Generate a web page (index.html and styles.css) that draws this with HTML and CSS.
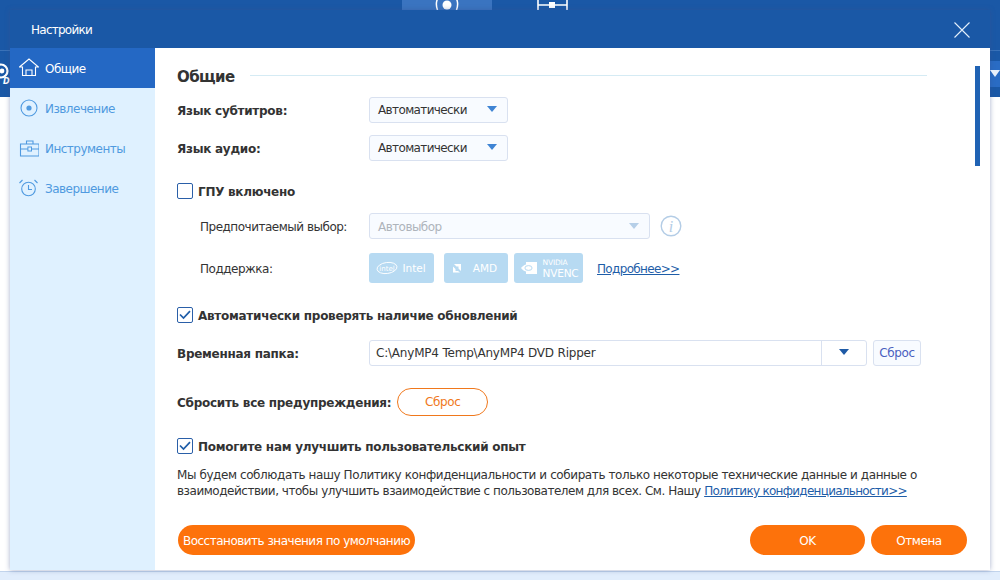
FILE: index.html
```html
<!DOCTYPE html>
<html lang="ru">
<head>
<meta charset="utf-8">
<title>Настройки</title>
<link rel="stylesheet" href="styles.css">
</head>
<body>
<div class="desktop">
  <div class="app-bg">
    <div class="app-top"></div>
    <div class="app-tab"><svg width="30" height="10" viewBox="0 0 30 10"><circle cx="15" cy="5" r="4.5" fill="#fff"/><path d="M6 -2 Q3 3 5.5 10M24 -2 Q27 3 24.5 10" fill="none" stroke="#fff" stroke-width="1.5"/></svg></div>
    <svg class="app-tool" width="32" height="10" viewBox="0 0 32 10"><path d="M1 0V10M30 0V10M1 5H30" stroke="#fff" stroke-width="1.6" fill="none"/><rect x="12" y="2" width="6" height="6" fill="#fff"/></svg>
    <svg class="app-disc" width="10" height="24" viewBox="0 0 10 24"><circle cx="1" cy="8" r="6.5" fill="none" stroke="#fff" stroke-width="2.2"/><circle cx="2" cy="8" r="2.4" fill="#fff"/><text x="3" y="21" class="disc-t">D</text></svg>
    <div class="app-arrow"></div>
    <div class="app-bottom"></div>
  </div>
  <div class="dialog">
    <header class="title-bar">
      <span class="title">Настройки</span>
      <svg class="close" width="16" height="16" viewBox="0 0 16 16"><path d="M.5.5 15.5 15.5M15.5.5.5 15.5" stroke="#e4f0fb" stroke-width="1.1" fill="none"/></svg>
    </header>
    <div class="body">
      <nav class="sidebar">
        <a class="nav-item active">
          <svg class="nav-icon" width="20" height="20" viewBox="0 1 20 20"><path d="M.5 10 10 2 19.5 10H16.5V18.5H3.5V10ZM7 18.5V13H13V18.5" fill="none" stroke="currentColor" stroke-width="1.1"/></svg>
          <span>Общие</span>
        </a>
        <a class="nav-item">
          <svg class="nav-icon" width="20" height="20" viewBox="0 0 20 20"><circle cx="10" cy="10" r="8" fill="none" stroke="currentColor" stroke-width="1.1"/><circle cx="10" cy="10" r="2.6" fill="currentColor"/></svg>
          <span>Извлечение</span>
        </a>
        <a class="nav-item">
          <svg class="nav-icon" width="20" height="20" viewBox="-1.5 0 20 20"><path d="M0 6H18.5V18H0ZM0 11H18.5M6 6V3H12.5V6" fill="none" stroke="currentColor" stroke-width="1.1"/><rect x="7.4" y="9" width="3.6" height="4" fill="#dff1ff" stroke="currentColor"/></svg>
          <span>Инструменты</span>
        </a>
        <a class="nav-item">
          <svg class="nav-icon" width="20" height="20" viewBox="0 0 20 20"><circle cx="9.5" cy="11" r="6.8" fill="none" stroke="currentColor" stroke-width="1.1"/><path d="M9.5 7V11.5H13M.5 5 3.5 2M18.5 5 15.5 2" fill="none" stroke="currentColor" stroke-width="1.1"/></svg>
          <span>Завершение</span>
        </a>
      </nav>
      <main class="content">
        <div class="scrollbar"></div>
        <div class="heading"><h1>Общие</h1><span class="rule"></span></div>

        <div class="row r-lang1">
          <label class="label">Язык субтитров:</label>
          <div class="select s-lang"><span>Автоматически</span><i class="caret"></i></div>
        </div>
        <div class="row r-lang2">
          <label class="label">Язык аудио:</label>
          <div class="select s-lang"><span>Автоматически</span><i class="caret"></i></div>
        </div>

        <div class="check-row r-gpu"><span class="box"></span><span class="label">ГПУ включено</span></div>

        <div class="row sub r-pref">
          <span class="sublabel">Предпочитаемый выбор:</span>
          <div class="select s-pref disabled"><span>Автовыбор</span><i class="caret"></i></div>
          <svg class="info" width="22" height="22" viewBox="0 0 22 22"><circle cx="11" cy="11" r="9.8" fill="none" stroke="#b4cde6" stroke-width="1.4"/><text x="11" y="16.5" text-anchor="middle" class="info-i">i</text></svg>
        </div>
        <div class="row sub r-support">
          <span class="sublabel">Поддержка:</span>
          <div class="chips">
            <span class="chip c-intel"><svg width="22" height="14" viewBox="0 0 22 14"><ellipse cx="11" cy="7" rx="10" ry="5.5" fill="none" stroke="#fff" stroke-width=".9" transform="rotate(-8 11 7)"/><text x="11" y="9.5" text-anchor="middle" class="intel-t">intel</text></svg><span class="chip-t">Intel</span></span>
            <span class="chip c-amd"><svg width="10" height="10" viewBox="0 0 10 10"><path d="M2 1H9V8L6.5 5.5V3.5H4.5ZM1 3.5 3.5 6V8H6L8 9.5H1Z" fill="#fff"/></svg><span class="chip-t">AMD</span></span>
            <span class="chip c-nv"><svg width="16" height="12" viewBox="0 0 16 12"><path d="M5 0H16V12H5V9.5C3 9 1 7.5 0 6 1 4.5 3 3 5 2.5Z" fill="#fff"/><ellipse cx="7.5" cy="6" rx="3.6" ry="2.4" fill="none" stroke="#b7daf2"/></svg><span class="chip-nv"><small>NVIDIA</small><b>NVENC</b></span></span>
          </div>
          <a class="link more">Подробнее&gt;&gt;</a>
        </div>

        <div class="check-row r-auto"><span class="box checked"><svg width="12" height="10" viewBox="0 0 12 10"><path d="M1 4.5 4.5 8 11 1.2" fill="none" stroke="#1e5da8" stroke-width="1.7"/></svg></span><span class="label">Автоматически проверять наличие обновлений</span></div>

        <div class="row r-temp">
          <label class="label">Временная папка:</label>
          <div class="path"><span class="path-t">C:\AnyMP4 Temp\AnyMP4 DVD Ripper</span><span class="path-btn"><i class="caret dark"></i></span></div>
          <button class="mini">Сброс</button>
        </div>

        <div class="reset-row">
          <span class="label">Сбросить все предупреждения:</span>
          <button class="outline">Сброс</button>
        </div>

        <div class="check-row r-help"><span class="box checked"><svg width="12" height="10" viewBox="0 0 12 10"><path d="M1 4.5 4.5 8 11 1.2" fill="none" stroke="#1e5da8" stroke-width="1.7"/></svg></span><span class="label">Помогите нам улучшить пользовательский опыт</span></div>

        <p class="note">Мы будем соблюдать нашу Политику конфиденциальности и собирать только некоторые технические данные и данные о<br><span class="note-tight">взаимодействии, чтобы улучшить взаимодействие с пользователем для всех. См. Нашу</span> <a class="link note-link">Политику конфиденциальности&gt;&gt;</a></p>

        <footer class="footer">
          <button class="pill restore">Восстановить значения по умолчанию</button>
          <div class="footer-right">
            <button class="pill ok">OK</button>
            <button class="pill cancel">Отмена</button>
          </div>
        </footer>
      </main>
    </div>
  </div>
</div>
</body>
</html>
```
FILE: styles.css
```css
* { box-sizing: border-box; }
html, body { margin: 0; height: 100%; overflow: hidden; }
body { font-family: "DejaVu Sans", Verdana, sans-serif; font-size: 12px; letter-spacing: -.4px; color: #333; background: #fff; }

.desktop { position: relative; width: 1000px; height: 580px; overflow: hidden; padding: 10px 10px 0; }
.app-bg { position: absolute; inset: 0; }
.app-top { height: 97px; background: linear-gradient(#1a58a6 0 50px, #3a72b8 50px 51px, #1a58a6 51px); }
.app-tab { position: absolute; left: 402px; top: 0; width: 90px; height: 10px; background: #3a74c0; text-align: center; line-height: 0; }
.app-tool { position: absolute; left: 537px; top: 0; }
.app-disc { position: absolute; left: 0; top: 63px; }
.disc-t { font-size: 8px; font-weight: 700; font-style: italic; fill: #fff; letter-spacing: 0; }
.app-arrow { position: absolute; left: 990px; top: 70px; width: 0; height: 0; border-left: 5px solid transparent; border-right: 5px solid transparent; border-top: 7px solid #e8f0fa; z-index: 1; }
.app-top::after { content: ""; position: absolute; left: 990px; top: 61px; width: 10px; height: 26px; background: #2a6cc4; }
.app-bottom { position: absolute; left: 0; right: 0; top: 571px; bottom: 0; background: #e1edfc; border-top: 1px solid #c2d4ec; }

.dialog { position: relative; height: 560px; display: flex; flex-direction: column; background: #fff; box-shadow: 0 0 5px rgba(60, 80, 140, .45); }
.title-bar { height: 38px; flex: none; display: flex; align-items: center; justify-content: space-between; padding: 2px 20px 0 21px; background: #1a58a6; color: #fff; }
.title { letter-spacing: -.75px; }
.close { display: block; margin-top: -1px; }
.body { flex: 1; display: flex; min-height: 0; }

.sidebar { width: 145px; flex: none; background: #dff1ff; }
.nav-item { height: 40px; display: flex; align-items: center; gap: 6px; padding-left: 9px; color: #4f9ae0; letter-spacing: -.52px; }
.nav-item span { position: relative; top: 1px; }
.nav-item.active { background: #2468c4; color: #fff; }
.nav-icon { flex: none; }

.content { position: relative; flex: 1; padding: 17px 0 0 22px; }
.scrollbar { position: absolute; left: 820px; top: 18px; width: 5px; height: 100px; background: #2063b4; }
.heading { display: flex; align-items: center; height: 22px; }
.heading h1 { margin: 0; padding-top: 2px; font-size: 15px; font-weight: 700; letter-spacing: -.6px; color: #333; }
.rule { width: 677px; height: 1px; margin: -1px 63px 0 auto; background: #d5ebf4; }

.label { font-weight: 700; letter-spacing: -.27px; color: #333; padding-top: 1px; }
.row { display: flex; align-items: center; }
.row > .label, .sublabel { width: 192px; flex: none; }
.sub { padding-left: 23px; }
.sub .sublabel { width: 169px; padding-top: 1px; letter-spacing: -.49px; }
.r-lang1 { margin-top: 10px; }
.r-lang2 { margin-top: 12px; }

.select { height: 26px; display: flex; align-items: center; justify-content: space-between; padding: 0 10px 0 8px; background: #f8fbff; border: 1px solid #d9e1f0; border-radius: 3px; letter-spacing: -.62px; }
.s-lang { width: 139px; }
.s-pref { width: 281px; padding-top: 1px; letter-spacing: -.55px; }
.disabled { color: #aeb4bb; }
.caret { display: block; width: 0; height: 0; border-left: 5.5px solid transparent; border-right: 5.5px solid transparent; border-top: 6px solid #3f84d4; margin-top: -2px; }
.disabled .caret { border-top-color: #b6cfe8; }
.caret.dark { border-top-color: #1e5aa6; }

.check-row { display: flex; align-items: center; gap: 5px; height: 16px; }
.box { width: 16px; height: 16px; flex: none; display: flex; align-items: center; justify-content: center; background: #fff; border: 1px solid #2a5fa8; border-radius: 2px; }
.r-gpu { margin-top: 22px; }
.r-pref { margin-top: 14px; }
.info { margin-left: 10px; flex: none; }
.info-i { font-family: "Liberation Serif", serif; font-style: italic; font-size: 16px; fill: #b4cde6; letter-spacing: 0; }
.r-support { margin-top: 14px; height: 30px; }
.chips { display: flex; }
.chip { height: 30px; display: flex; align-items: center; justify-content: center; background: #b7daf2; color: #fff; border-radius: 3px; font-size: 10.5px; letter-spacing: 0; }
.c-intel { width: 65px; gap: 4px; padding-right: 1px; }
.intel-t { font-size: 7px; fill: #fff; letter-spacing: 0; }
.c-amd { width: 64px; margin-left: 10px; gap: 11px; padding-right: 3px; }
.c-nv { width: 69px; margin-left: 6px; gap: 6px; padding-left: 2px; }
.chip-nv { display: flex; flex-direction: column; line-height: 10px; letter-spacing: -.2px; }
.chip-nv small { font-size: 7.5px; }
.chip-nv b { font-weight: 400; font-size: 10.5px; }
.link { color: #1e5da8; text-decoration: underline; letter-spacing: -.66px; }
.more { margin-left: 14px; padding-top: 1px; }

.r-auto { margin-top: 24px; }
.r-temp { margin-top: 17px; }
.path { width: 498px; height: 26px; display: flex; background: #fff; border: 1px solid #d9e1f0; border-radius: 3px; letter-spacing: -.2px; }
.path-t { flex: 1; align-self: center; padding-left: 6px; }
.path-btn { width: 45px; display: flex; align-items: center; justify-content: center; border-left: 1px solid #d9e1f0; }
.mini { width: 48px; height: 26px; margin-left: 6px; padding: 0; font: inherit; letter-spacing: inherit; color: #4a5fc0; background: #f8fbff; border: 1px solid #d9e1f0; border-radius: 3px; }
.reset-row { display: flex; align-items: center; margin-top: 22px; gap: 6px; }
.outline { width: 91px; height: 28px; padding: 0; font: inherit; letter-spacing: inherit; color: #f0781c; background: #fff; border: 1px solid #f0781c; border-radius: 14px; }
.r-help { margin-top: 22px; }
.note { margin: 13px 0 0; line-height: 16px; color: #333; letter-spacing: -.41px; }
.note-tight { letter-spacing: -.47px; }
.note-link { letter-spacing: -.72px; }

.footer { display: flex; justify-content: space-between; margin: 26px 23px 0 1px; }
.footer-right { display: flex; gap: 6px; }
.pill { height: 30px; padding: 1px 0 0; font: inherit; letter-spacing: inherit; color: #fff; background: #fd720b; border: 0; border-radius: 15px; }
.restore { width: 237px; white-space: nowrap; letter-spacing: -.5px; }
.ok { width: 115px; }
.cancel { width: 96px; }
```
